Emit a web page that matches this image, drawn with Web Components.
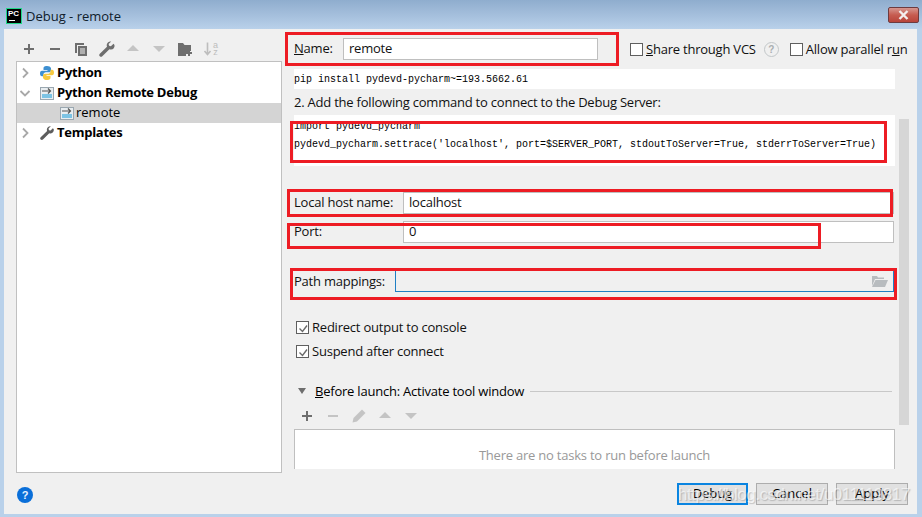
<!DOCTYPE html>
<html>
<head>
<meta charset="utf-8">
<title>Debug - remote</title>
<style>
  html, body { margin: 0; padding: 0; background: #b9d1ea; overflow: hidden; }
  body { font: 13px "Open Sans", "Noto Sans", sans-serif; color: #111; }
</style>
</head>
<body>
<debug-dialog></debug-dialog>

<script>
const UI_FONT = '"Open Sans", "Noto Sans", sans-serif'
const ICONS = {
  plus: '<path d="M8 3v10M3 8h10" stroke="#6e6e6e" stroke-width="2" fill="none"/>',
  minus: '<path d="M3 8h10" stroke="#6e6e6e" stroke-width="2" fill="none"/>',
  minusOff: '<path d="M3 8h10" stroke="#c4c4c4" stroke-width="2" fill="none"/>',
  copy: '<path d="M2 2h9v2H4v8H2z" fill="#6e6e6e"/><path d="M5 5h9v10H5z" fill="#6e6e6e"/><path d="M7 8h5M7 10h5M7 12h5" stroke="#f0f0f0" stroke-width="1"/>',
  wrench: '<path d="M14.5 2.2l-2.6 2.6-1.8-.5-.5-1.8L12.2 0C10 -.4 7.8 1.2 7.7 3.6c0 .6.1 1.1.3 1.6L.8 12.2c-.8.8-.8 1.9 0 2.6.7.7 1.8.7 2.5 0l7.1-7.1c.5.2 1 .3 1.6.3 2.4-.1 3.9-2.300 3.500-4.600z" fill="#6e6e6e" transform="translate(0 .5)"/>',
  up: '<path d="M8 4l6 6H2z" fill="#c4c4c4"/>',
  down: '<path d="M2 5h12l-6 6z" fill="#c4c4c4"/>',
  folderAdd: '<path d="M1 2h5l1.500 2H14v6h-3v2H9v3H1z" fill="#6e6e6e"/><path d="M12 9v6M9 12h6" stroke="#6e6e6e" stroke-width="2"/>',
  sortAz: '<path d="M4.500 1.500V13M1.500 10l3 3.500 3-3.500" stroke="#bdbdbd" stroke-width="1.600" fill="none"/>',
  pencil: '<path d="M11 1.500l3.500 3.500-8.500 8.500-4.500 1 1-4.500z" fill="#c4c4c4"/>'
}

class TitleBar extends HTMLElement {
  constructor () {
    super()
    this.shadow = this.attachShadow({ mode: 'open' })
  }

  connectedCallback () {
    this.shadow.innerHTML = /* html */`
      <style>
        :host {
          display: flex;
          align-items: center;
          height: 29px;
          padding: 3px 3px 0 6px;
          box-sizing: border-box;
          background: linear-gradient(#8fadce, #a6c0dd 55%, #b9d1ea);
          font: 13px ${UI_FONT};
          color: #10202c;
        }
        .logo {
          width: 16px;
          height: 16px;
          box-sizing: border-box;
          background: #000;
          border: 1px solid #21d789;
          color: #fff;
          font: bold 8px/9px "Liberation Sans", sans-serif;
          padding-left: 1px;
          position: relative;
          flex: none;
        }
        .logo::after {
          content: "";
          position: absolute;
          left: 2px;
          bottom: 2px;
          width: 6px;
          height: 1px;
          background: #fff;
        }
        .title { margin-left: 4px; flex: 1; }
        .close {
          width: 31px;
          height: 16px;
          box-sizing: border-box;
          margin-top: -3px;
          border: 1px solid #6d3b3f;
          border-radius: 2px;
          background: linear-gradient(#d6968f, #c65c50 50%, #b8443a);
          display: flex;
          align-items: center;
          justify-content: center;
        }
      </style>
      <div class="logo">PC</div>
      <div class="title">Debug - remote</div>
      <div class="close">
        <svg width="11" height="10" viewBox="0 0 11 10"><path d="M1.500 1l8 8M9.500 1l-8 8" stroke="#f4eeee" stroke-width="2.400"/></svg>
      </div>
    `
  }
}
customElements.define('title-bar', TitleBar)

class IconBar extends HTMLElement {
  constructor () {
    super()
    this.shadow = this.attachShadow({ mode: 'open' })
  }

  connectedCallback () {
    const items = (this.getAttribute('icons') || '').split(' ')
    this.shadow.innerHTML = /* html */`
      <style>
        :host { display: flex; height: 24px; align-items: center; gap: 10px; }
        svg { width: 16px; height: 16px; flex: none; display: block; }
        span { font: 9px/7px "Liberation Sans", sans-serif; color: #bdbdbd; }
        .wrap { position: relative; width: 16px; height: 16px; }
        .az { position: absolute; left: 9px; top: 1px; width: 7px; text-align: center; }
      </style>
      ${items.map(name => name === 'sortAz'
        ? `<div class="wrap"><svg viewBox="0 0 16 16">${ICONS.sortAz}</svg><span class="az">a<br>z</span></div>`
        : `<svg viewBox="0 0 16 16">${ICONS[name]}</svg>`).join('')}
    `
  }
}
customElements.define('icon-bar', IconBar)

class TreeRow extends HTMLElement {
  constructor () {
    super()
    this.shadow = this.attachShadow({ mode: 'open' })
  }

  connectedCallback () {
    const arrow = this.getAttribute('arrow')
    const depth = Number(this.getAttribute('depth') || 0)
    const arrowSvg = arrow === 'open'
      ? '<path d="M1.500 4l4.500 4.500L10.500 4" stroke="#a8a8a8" stroke-width="1.800" fill="none"/>'
      : arrow === 'closed'
        ? '<path d="M4 1.500l4.500 4.500L4 10.500" stroke="#a8a8a8" stroke-width="1.800" fill="none"/>'
        : ''
    this.shadow.innerHTML = /* html */`
      <style>
        :host {
          display: flex;
          align-items: center;
          height: 20px;
          padding-left: ${depth ? 43 : 2}px;
          font: ${depth ? '400' : '700'} 13px ${UI_FONT};
          letter-spacing: ${depth ? 0 : -0.26}px;
          color: #000;
        }
        :host([selected]) { background: #d4d4d4; }
        .arrow { width: 12px; height: 12px; flex: none; margin-right: 9px; }
        ::slotted(svg) { width: 16px; height: 16px; flex: none; margin-right: ${depth ? 0 : 1}px; }
        .label { padding-bottom: 2px; }
      </style>
      ${depth ? '' : `<svg class="arrow" viewBox="0 0 12 12">${arrowSvg}</svg>`}
      <slot name="icon"></slot>
      <div class="label"><slot></slot></div>
    `
  }
}
customElements.define('tree-row', TreeRow)

class ConfigTree extends HTMLElement {
  constructor () {
    super()
    this.shadow = this.attachShadow({ mode: 'open' })
  }

  connectedCallback () {
    const remoteIcon = '<rect x="1.500" y="2.500" width="13" height="12" fill="#e8edf0" stroke="#9aa7b0"/><rect x="3" y="9" width="10" height="4" fill="#7cc3e4"/><path d="M3 6h8M9 3.500L11.500 6 9 8.500" stroke="#555" stroke-width="1.200" fill="none"/>'
    this.shadow.innerHTML = /* html */`
      <style>
        :host {
          display: block;
          box-sizing: border-box;
          height: 412px;
          background: #fff;
          border: 1px solid #c0c0c0;
          padding-top: 1px;
        }
      </style>
      <tree-row arrow="closed">
        <svg slot="icon" viewBox="1 0 16 16">
          <path d="M8 1C5 1 4.500 2.200 4.500 3.500V5H8.500v.8H3C1.500 5.800 1 7 1 8.500s.6 2.800 2 2.800h1.500V9.500c0-1.200 1-2.200 2.200-2.200h3.400c1 0 1.900-.9 1.900-1.900V3.300C11.500 1.800 10 1 8 1z" fill="#3d8fd1"/>
          <path d="M8 15c3 0 3.500-1.200 3.500-2.500V11H7.500v-.8H13c1.500 0 2-1.200 2-2.700s-.6-2.800-2-2.800h-1.500v1.800c0 1.200-1 2.200-2.200 2.200H5.900c-1 0-1.900.9-1.900 1.900v2.100C4.500 14.200 6 15 8 15z" fill="#f7c93e"/>
        </svg>
        Python
      </tree-row>
      <tree-row arrow="open">
        <svg slot="icon" viewBox="1 0 16 16">${remoteIcon}</svg>
        Python Remote Debug
      </tree-row>
      <tree-row depth="1" selected>
        <svg slot="icon" viewBox="1 0 16 16">${remoteIcon}</svg>
        remote
      </tree-row>
      <tree-row arrow="closed">
        <svg slot="icon" viewBox="0 -1 18 18">${ICONS.wrench.replace(/#6e6e6e/, '#5d5d5d')}</svg>
        Templates
      </tree-row>
    `
  }
}
customElements.define('config-tree', ConfigTree)

class TextField extends HTMLElement {
  constructor () {
    super()
    this.shadow = this.attachShadow({ mode: 'open' })
  }

  connectedCallback () {
    this.shadow.innerHTML = /* html */`
      <style>
        :host {
          display: flex;
          align-items: center;
          box-sizing: border-box;
          height: 22px;
          padding: 0 0 2px 5px;
          background: #fff;
          border: 1px solid #bfbfbf;
          color: #111;
        }
      </style>
      <slot></slot>
    `
  }
}
customElements.define('text-field', TextField)

class FormRow extends HTMLElement {
  constructor () {
    super()
    this.shadow = this.attachShadow({ mode: 'open' })
  }

  connectedCallback () {
    const labelWidth = this.getAttribute('label-width') || '109'
    this.shadow.innerHTML = /* html */`
      <style>
        :host { display: flex; align-items: center; height: 22px; margin-right: 1px; }
        .label { width: ${labelWidth}px; flex: none; padding-bottom: 2px; box-sizing: border-box; white-space: nowrap; }
        ::slotted(*) { flex: 1; }
      </style>
      <div class="label">${this.getAttribute('label')}</div>
      <slot></slot>
    `
  }
}
customElements.define('form-row', FormRow)

class IdeCheck extends HTMLElement {
  constructor () {
    super()
    this.shadow = this.attachShadow({ mode: 'open' })
  }

  connectedCallback () {
    const tick = this.hasAttribute('checked')
      ? '<path d="M2.500 6.500l3 3 4.500-6" stroke="#6a6a6a" stroke-width="1.400" fill="none"/>'
      : ''
    this.shadow.innerHTML = /* html */`
      <style>
        :host { display: inline-flex; align-items: center; height: 20px; gap: 3px; flex: none; }
        .box {
          width: 13px;
          height: 13px;
          box-sizing: border-box;
          background: #fff;
          border: 1px solid #5f5f5f;
          flex: none;
          display: block;
        }
      </style>
      <svg class="box" viewBox="0 0 11 11" width="13" height="13" style="overflow:hidden">${tick}</svg>
      <span><slot></slot></span>
    `
  }
}
customElements.define('ide-check', IdeCheck)

class IdeButton extends HTMLElement {
  constructor () {
    super()
    this.shadow = this.attachShadow({ mode: 'open' })
  }

  connectedCallback () {
    this.shadow.innerHTML = /* html */`
      <style>
        :host {
          display: flex;
          align-items: center;
          justify-content: center;
          box-sizing: border-box;
          width: 72px;
          height: 22px;
          padding-bottom: 2px;
          background: #e1e1e1;
          border: 1px solid #adadad;
          color: #000;
        }
        :host([primary]) { border: 2px solid #0a84e0; width: 71px; }
      </style>
      <slot></slot>
    `
  }
}
customElements.define('ide-button', IdeButton)

class RedFrame extends HTMLElement {
  constructor () {
    super()
    this.shadow = this.attachShadow({ mode: 'open' })
  }

  connectedCallback () {
    const [x, y, w, h] = this.getAttribute('box').split(' ')
    this.shadow.innerHTML = /* html */`
      <style>
        :host {
          position: absolute;
          left: ${x}px;
          top: ${y}px;
          width: ${w}px;
          height: ${h}px;
          box-sizing: border-box;
          border: 3px solid #ed1c24;
          pointer-events: none;
        }
      </style>
    `
  }
}
customElements.define('red-frame', RedFrame)

class RemoteForm extends HTMLElement {
  constructor () {
    super()
    this.shadow = this.attachShadow({ mode: 'open' })
  }

  connectedCallback () {
    this.shadow.innerHTML = /* html */`
      <style>
        :host {
          display: flex;
          height: 440px;
          overflow: hidden;
          padding-left: 12px;
          gap: 4px;
          font: 13px ${UI_FONT};
          letter-spacing: -0.22px;
          color: #111;
        }
        .content { width: 601px; flex: none; }
        .scroll { width: 10px; height: 306px; margin-top: 90px; background: #d6d6d6; flex: none; }
        u { text-decoration: underline; }

        .name { display: flex; align-items: center; height: 22px; margin-top: 9px; }
        .name .label { width: 49px; flex: none; padding-bottom: 2px; box-sizing: border-box; }
        .name text-field { width: 255px; flex: none; }
        .name ide-check:first-of-type { margin-left: 32px; }
        .help {
          width: 13px;
          height: 13px;
          border: 1px solid #c2c7c9;
          border-radius: 50%;
          margin: 0 11px 0 8px;
          color: #a9aeb0;
          font: 700 10px/13px "Liberation Sans", sans-serif;
          text-align: center;
          flex: none;
        }

        .band {
          background: #fff;
          font: 10px "Liberation Mono", monospace;
          letter-spacing: 0;
          color: #000;
          white-space: pre;
        }
        .pip { height: 20px; line-height: 22px; margin-top: 9px; }
        .step { height: 26px; line-height: 26px; }
        .code { height: 51px; line-height: 18px; padding-top: 3px; box-sizing: border-box; }

        .host-row { margin-top: 26px; }
        .port-row { margin-top: 7px; }
        .path-row { margin-top: 28px; }
        .path-field {
          display: flex;
          align-items: center;
          justify-content: flex-end;
          box-sizing: border-box;
          height: 21px;
          margin-bottom: 1px;
          padding-right: 5px;
          border-left: 1px solid #1f7fc4;
          border-right: 1px solid #1f7fc4;
          border-bottom: 1px solid #1f7fc4;
        }
        .checks { display: flex; flex-direction: column; gap: 4px; margin: 24px 0 0 2px; }

        .before { display: flex; align-items: center; height: 20px; margin-top: 20px; }
        .before svg { margin-left: 4px; flex: none; }
        .before span { margin-left: 9px; flex: none; color: #000; }
        .before i { flex: 1; height: 1px; background: #c8c8c8; margin: 1px 3px 0 6px; }
        icon-bar { margin: 3px 0 0 5px; }
        .tasks {
          margin-top: 1px;
          height: 60px;
          box-sizing: border-box;
          padding-top: 15px;
          line-height: 20px;
          background: #fff;
          border: 1px solid #bfbfbf;
          text-align: center;
          color: #999;
        }
      </style>
      <div class="content">
        <div class="name">
          <div class="label"><u>N</u>ame:</div>
          <text-field>remote</text-field>
          <ide-check><u>S</u>hare through VCS</ide-check>
          <div class="help">?</div>
          <ide-check>Allow parallel r<u>u</u>n</ide-check>
        </div>
        <div class="band pip">pip install pydevd-pycharm~=193.5662.61</div>
        <div class="step">2. Add the following command to connect to the Debug Server:</div>
        <div class="band code">import pydevd_pycharm
pydevd_pycharm.settrace('localhost', port=$SERVER_PORT, stdoutToServer=True, stderrToServer=True)</div>
        <form-row class="host-row" label="Local host name:"><text-field>localhost</text-field></form-row>
        <form-row class="port-row" label="Port:"><text-field>0</text-field></form-row>
        <form-row class="path-row" label="Path mappings:" label-width="101">
          <div class="path-field">
            <svg width="16" height="12" viewBox="0 0 16 12"><path d="M0 1h5l1 1.500h6V4H3L0 11z" fill="#b8bcbf"/><path d="M3.500 5H16l-3 7H0z" fill="#b8bcbf"/></svg>
          </div>
        </form-row>
        <div class="checks">
          <ide-check checked>Redirect output to console</ide-check>
          <ide-check checked>Suspend after connect</ide-check>
        </div>
        <div class="before">
          <svg width="8" height="6" viewBox="0 0 8 6"><path d="M0 0h8L4 6z" fill="#6e6e6e"/></svg>
          <span><u>B</u>efore launch: Activate tool window</span>
          <i></i>
        </div>
        <icon-bar icons="plus minusOff pencil up down"></icon-bar>
        <div class="tasks">There are no tasks to run before launch</div>
      </div>
      <div class="scroll"></div>
    `
  }
}
customElements.define('remote-form', RemoteForm)

class DebugDialog extends HTMLElement {
  constructor () {
    super()
    this.shadow = this.attachShadow({ mode: 'open' })
  }

  connectedCallback () {
    this.shadow.innerHTML = /* html */`
      <style>
        :host {
          display: block;
          position: relative;
          width: 922px;
          height: 517px;
          background: #b9d1ea;
        }
        .client {
          display: grid;
          grid-template-columns: 278px 1fr;
          grid-template-rows: 444px 41px;
          margin: 0 5px 3px 4px;
          background: #f0f0f0;
        }
        .left { padding-left: 12px; }
        .left icon-bar { margin: 8px 0 0 5px; }
        .footer {
          grid-column: 1 / 3;
          display: flex;
          align-items: flex-start;
          padding: 10px 9px 0 13px;
          gap: 8px;
          font: 13px ${UI_FONT};
        }
        .help {
          width: 16px;
          height: 16px;
          margin-top: 4px;
          margin-right: auto;
          border-radius: 50%;
          background: #0a6fd9;
          color: #e8f2ff;
          font: 700 11px/16px "Liberation Sans", sans-serif;
          text-align: center;
        }
        .watermark {
          position: absolute;
          left: 678px;
          top: 485px;
          font: 17px/20px "Liberation Sans", sans-serif;
          letter-spacing: -.5px;
          color: rgba(255, 255, 255, .62);
          text-shadow: 1px 1px 1px rgba(60, 60, 60, .25);
          white-space: nowrap;
        }
      </style>
      <title-bar></title-bar>
      <div class="client">
        <div class="left">
          <icon-bar icons="plus minus copy wrench up down folderAdd sortAz"></icon-bar>
          <config-tree></config-tree>
        </div>
        <remote-form></remote-form>
        <div class="footer">
          <div class="help">?</div>
          <ide-button primary>Debug</ide-button>
          <ide-button>Cancel</ide-button>
          <ide-button><span><u>A</u>pply</span></ide-button>
        </div>
      </div>
      <red-frame box="285 32 334 34"></red-frame>
      <red-frame box="290 121 597 42"></red-frame>
      <red-frame box="287 189 606 28"></red-frame>
      <red-frame box="287 223 534 26"></red-frame>
      <red-frame box="290 268 607 32"></red-frame>
      <div class="watermark">https://blog.csdn.net/u011119817</div>
    `
  }
}
customElements.define('debug-dialog', DebugDialog)
</script>
</body>
</html>
